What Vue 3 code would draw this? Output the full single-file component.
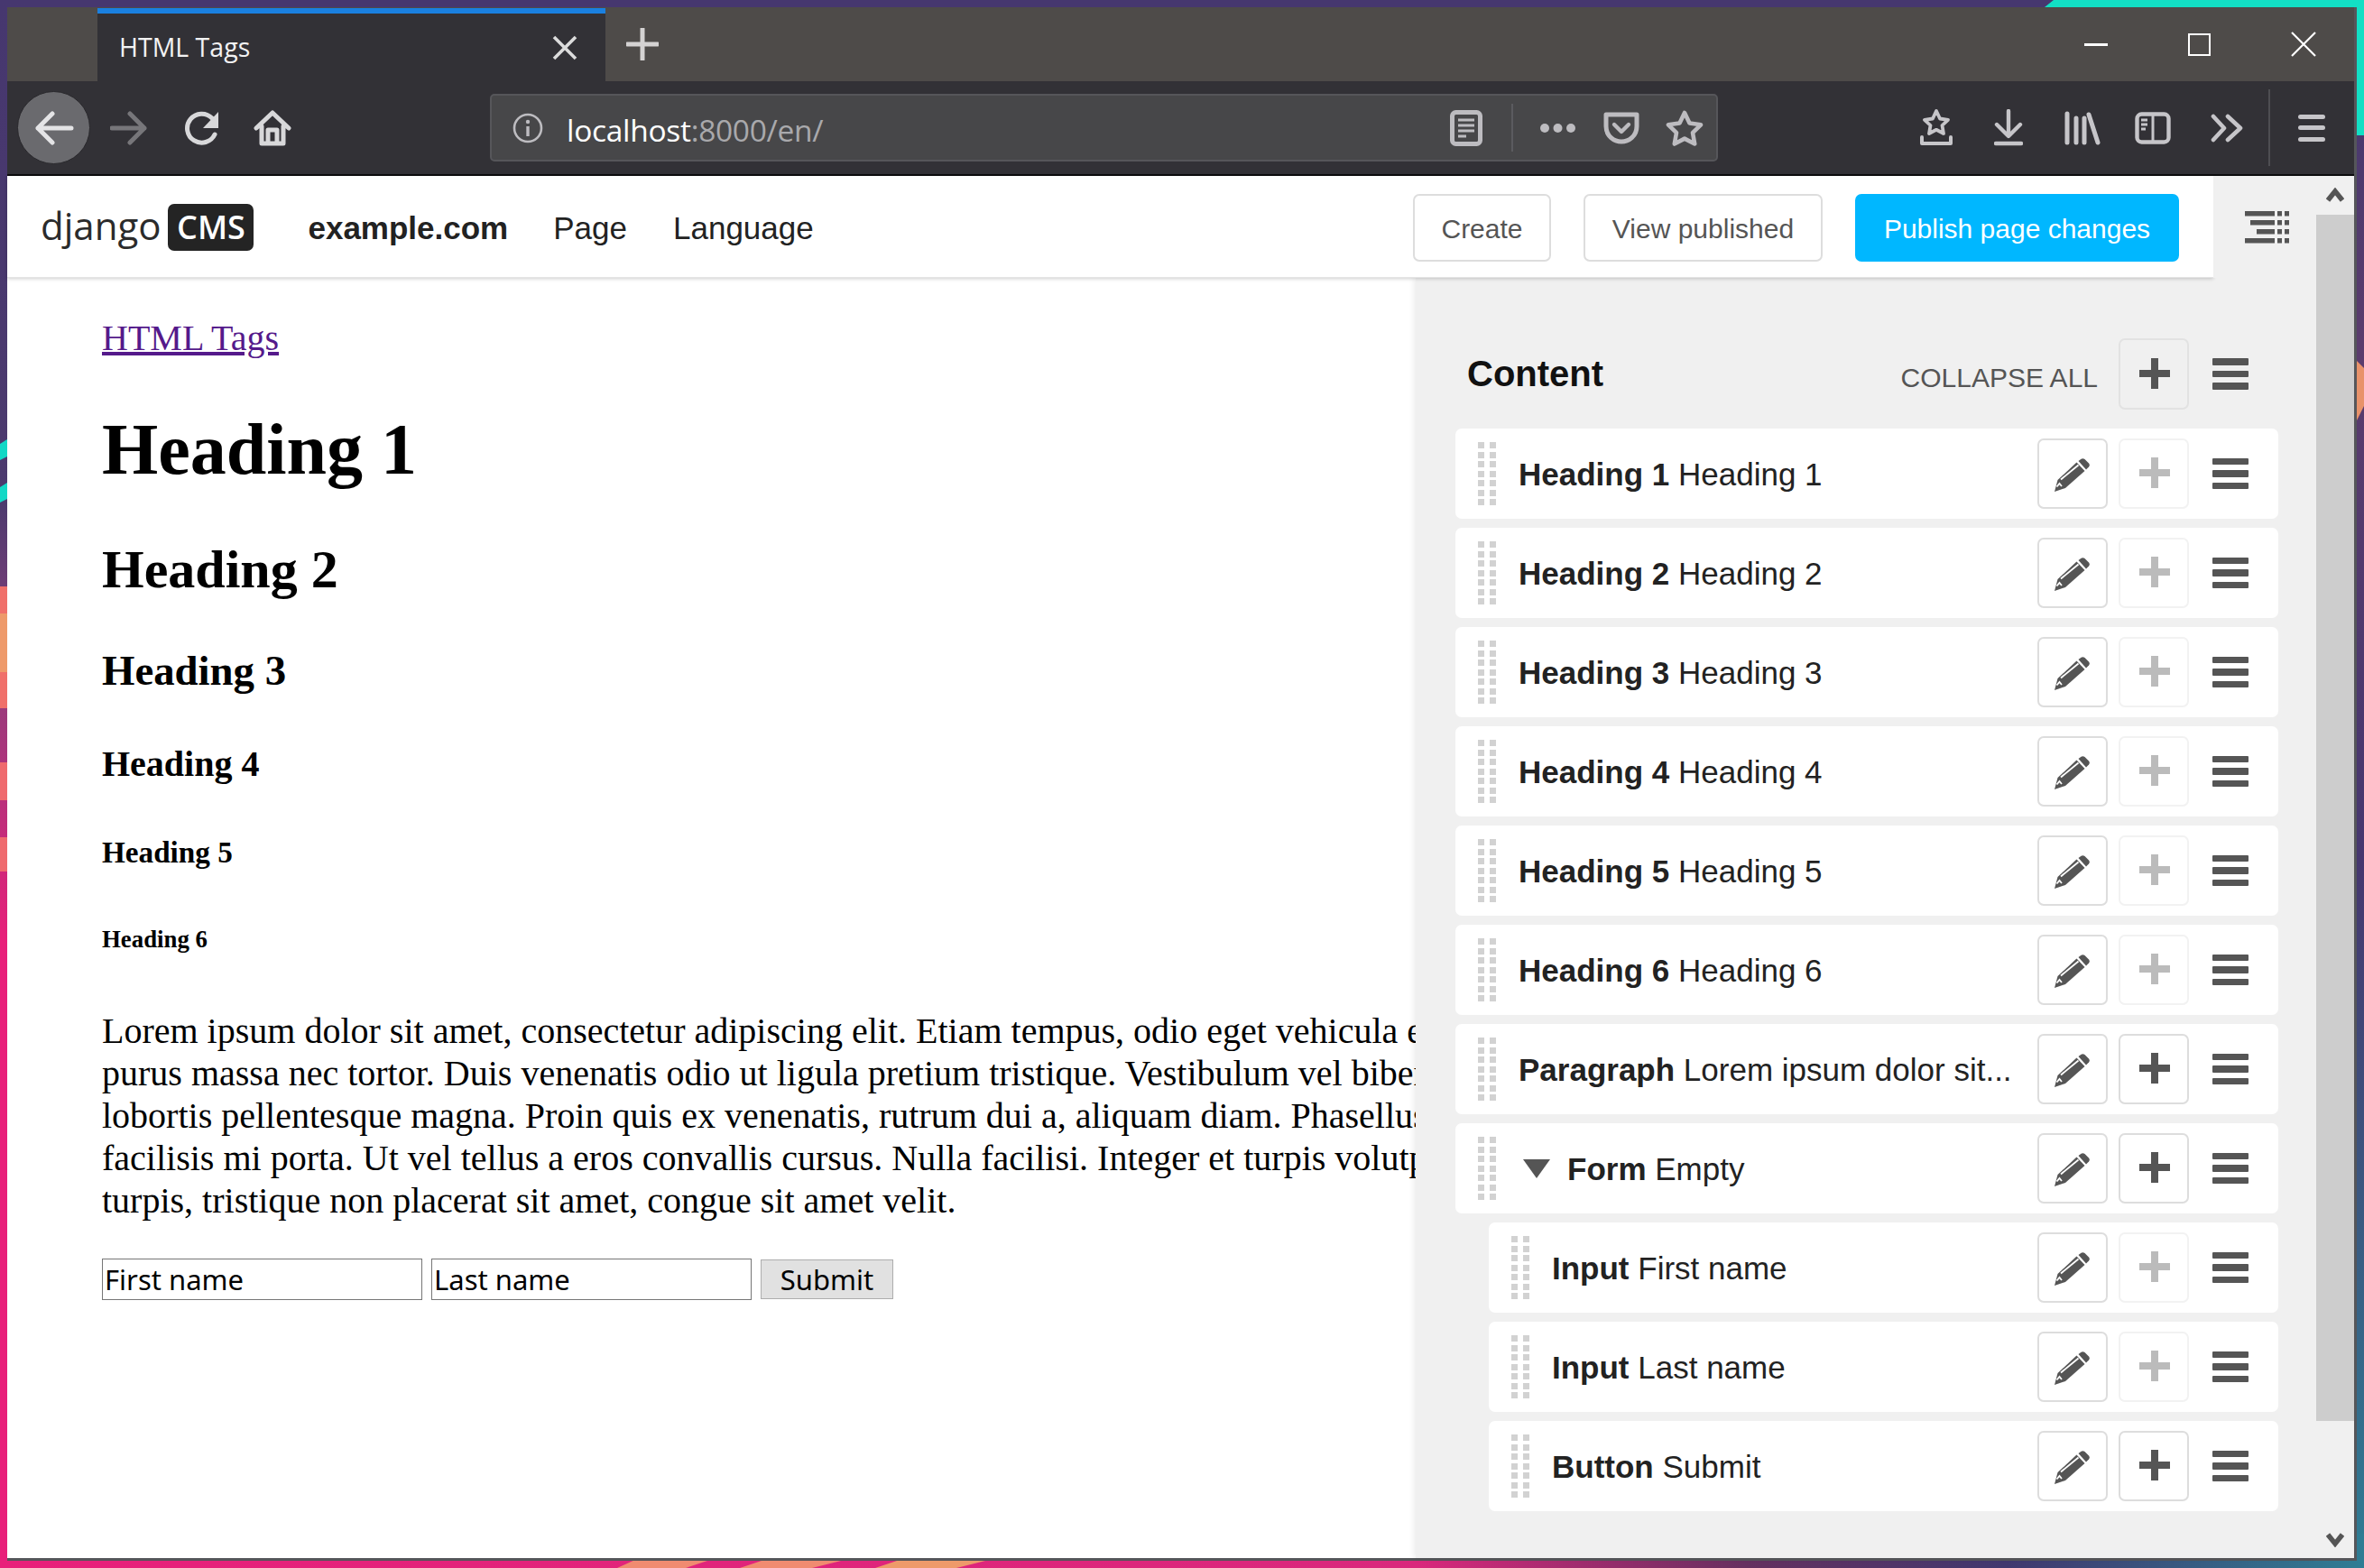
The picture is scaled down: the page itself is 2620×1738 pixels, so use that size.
<template>
  <div class="desktop">
    <svg class="wallpaper" viewBox="0 0 2620 1738" preserveAspectRatio="none" aria-hidden="true">
      <defs>
        <linearGradient id="wall-left" x1="0" y1="0" x2="0" y2="1">
          <stop offset="0" stop-color="#46376f" />
          <stop offset="0.32" stop-color="#4c3a6e" />
          <stop offset="0.42" stop-color="#8b3f7c" />
          <stop offset="0.6" stop-color="#e8207a" />
          <stop offset="1" stop-color="#e8207a" />
        </linearGradient>
        <linearGradient id="wall-right" x1="0" y1="0" x2="0" y2="1">
          <stop offset="0" stop-color="#40386f" />
          <stop offset="0.22" stop-color="#5b3c6d" />
          <stop offset="0.55" stop-color="#46376f" />
          <stop offset="1" stop-color="#2f7d94" />
        </linearGradient>
        <linearGradient id="wall-bottom" x1="0" y1="0" x2="1" y2="0">
          <stop offset="0" stop-color="#e8207a" />
          <stop offset="0.6" stop-color="#d9287c" />
          <stop offset="0.74" stop-color="#64305f" />
          <stop offset="0.85" stop-color="#40386f" />
          <stop offset="1" stop-color="#2f7d94" />
        </linearGradient>
      </defs>
      <rect width="2620" height="1738" fill="#46376f" />
      <rect width="30" height="1738" fill="url(#wall-left)" />
      <rect x="2590" width="30" height="1738" fill="url(#wall-right)" />
      <rect y="1700" width="2620" height="38" fill="url(#wall-bottom)" />
      <polygon points="2266,8 2276,0 2620,0 2620,150 2606,150 2606,8" fill="#12dfc4" />
      <polygon points="0,492 8,487 8,506 0,510" fill="#12d8c6" />
      <polygon points="0,540 8,535 8,553 0,557" fill="#12d8c6" />
      <rect y="650" width="8" height="135" fill="#f0706a" />
      <rect y="680" width="8" height="65" fill="#ee9a6a" />
      <rect y="845" width="8" height="42" fill="#ef6a6e" />
      <rect y="928" width="8" height="38" fill="#ef6a6e" />
      <polygon points="2612,400 2620,408 2620,450 2612,466" fill="#e8926a" />
      <polygon points="684,1738 706,1728 790,1728 760,1738" fill="#f08b70" />
      <polygon points="820,1738 850,1728 940,1728 900,1738" fill="#f08b70" />
      <polygon points="970,1738 1000,1728 1100,1728 1060,1738" fill="#ee9a6a" />
    </svg>

    <div class="window">
      <div class="tabbar">
        <div class="tab">
          <span class="tab-title">HTML Tags</span>
          <svg class="tab-close" width="28" height="28" viewBox="0 0 28 28">
            <path d="M2 2 26 26M26 2 2 26" stroke="#dcdcdc" stroke-width="3.6" fill="none" />
          </svg>
        </div>
        <svg class="tab-new" width="36" height="36" viewBox="0 0 36 36">
          <path d="M18 1V35M1 18H35" stroke="#d4d2d2" stroke-width="5" stroke-linecap="round" fill="none" />
        </svg>
        <div class="win-controls">
          <span class="win-min"></span>
          <span class="win-max"></span>
          <svg width="28" height="28" viewBox="0 0 28 28">
            <path d="M1 1 27 27M27 1 1 27" stroke="#fff" stroke-width="2.2" fill="none" />
          </svg>
        </div>
      </div>

      <div class="navbar">
        <div class="back-btn">
          <svg width="44" height="38" viewBox="0 0 44 38">
            <path d="M41 19H4M20 3 4 19 20 35" stroke="#e4e4e6" stroke-width="5" stroke-linecap="round" stroke-linejoin="round" fill="none" />
          </svg>
        </div>
        <svg class="nav-forward" width="42" height="38" viewBox="0 0 42 38">
          <path d="M2 19H38M22 3 38 19 22 35" stroke="#77767a" stroke-width="5" stroke-linecap="round" stroke-linejoin="round" fill="none" />
        </svg>
        <svg class="nav-reload" width="40" height="38" viewBox="0 0 40 38">
          <path d="M33 26A16 16 0 1 1 30 8" stroke="#d8d8da" stroke-width="5" stroke-linecap="round" fill="none" />
          <path d="M37 1V19H20Z" fill="#d8d8da" />
        </svg>
        <svg class="nav-home" width="42" height="40" viewBox="0 0 42 40">
          <path d="M3 20 21 3 39 20M9 18V37H33V18M16 37V22H26V37" stroke="#d8d8da" stroke-width="5" stroke-linecap="round" stroke-linejoin="round" fill="none" />
        </svg>

        <div class="urlbar">
          <svg class="url-info" width="34" height="34" viewBox="0 0 34 34">
            <circle cx="17" cy="17" r="15" stroke="#bdbcc0" stroke-width="2.6" fill="none" />
            <path d="M17 15V26" stroke="#bdbcc0" stroke-width="3.4" />
            <circle cx="17" cy="10" r="2.2" fill="#bdbcc0" />
          </svg>
          <span class="url-text">localhost<span class="url-dim">:8000/en/</span></span>
          <svg class="url-reader" width="36" height="40" viewBox="0 0 36 40">
            <rect x="2.5" y="2.5" width="31" height="35" rx="4" stroke="#bdbcc0" stroke-width="5" fill="none" />
            <path d="M9 11H27M9 17H27M9 23H27M9 29H18" stroke="#bdbcc0" stroke-width="3" fill="none" />
          </svg>
          <span class="url-sep"></span>
          <svg class="url-dots" width="41" height="12" viewBox="0 0 41 12">
            <circle cx="6" cy="6" r="5" fill="#bdbcc0" /><circle cx="20.5" cy="6" r="5" fill="#bdbcc0" /><circle cx="35" cy="6" r="5" fill="#bdbcc0" />
          </svg>
          <svg class="url-pocket" width="40" height="36" viewBox="0 0 40 36">
            <path d="M3 3H37V16C37 27 28 33 20 33 12 33 3 27 3 16Z" stroke="#bdbcc0" stroke-width="5" stroke-linejoin="round" fill="none" />
            <path d="M12 14 20 22 28 14" stroke="#bdbcc0" stroke-width="4.4" stroke-linecap="round" stroke-linejoin="round" fill="none" />
          </svg>
          <svg class="url-star" width="42" height="40" viewBox="0 0 42 40">
            <path d="M21 3 26.500 14.500 39 16.300 30 25.200 32.200 37.500 21 31.600 9.800 37.500 12 25.200 3 16.300 15.500 14.500Z" stroke="#bdbcc0" stroke-width="4.600" stroke-linejoin="round" fill="none" />
          </svg>
        </div>

        <svg class="tool-save" width="36" height="42" viewBox="0 0 36 42">
          <path d="M18 2 22 10.500 31 11.800 24.500 18 26 27 18 22.800 10 27 11.500 18 5 11.800 14 10.500Z" stroke="#c6c5c9" stroke-width="3.800" stroke-linejoin="round" fill="none" />
          <path d="M2 31V38H34V31" stroke="#c6c5c9" stroke-width="4" stroke-linecap="round" stroke-linejoin="round" fill="none" />
        </svg>
        <svg class="tool-down" width="32" height="42" viewBox="0 0 32 42">
          <path d="M16 2V29M3 17 16 30 29 17M2 38H30" stroke="#c6c5c9" stroke-width="4.400" stroke-linecap="round" stroke-linejoin="round" fill="none" />
        </svg>
        <svg class="tool-lib" width="40" height="38" viewBox="0 0 40 38">
          <path d="M3 3V35M13 8V35M22 8V35M27 4 37 35" stroke="#c6c5c9" stroke-width="5" stroke-linecap="round" fill="none" />
        </svg>
        <svg class="tool-side" width="40" height="36" viewBox="0 0 40 36">
          <rect x="2.500" y="2.500" width="35" height="31" rx="5" stroke="#c6c5c9" stroke-width="4.400" fill="none" />
          <path d="M20 3V33M7 9H14M7 14H14M7 19H12" stroke="#c6c5c9" stroke-width="3" fill="none" />
        </svg>
        <svg class="tool-more" width="36" height="32" viewBox="0 0 36 32">
          <path d="M3 3 15 16 3 29M19 3 33 16 19 29" stroke="#c6c5c9" stroke-width="4.600" stroke-linecap="round" stroke-linejoin="round" fill="none" />
        </svg>
        <span class="tool-sep"></span>
        <div class="tool-menu"><span></span><span></span><span></span></div>
      </div>

      <div class="viewport">
        <div class="page">
          <div class="cms-bar">
            <div class="cms-toolbar">
              <div class="logo">
                <span class="logo-word">django</span>
                <span class="logo-badge">CMS</span>
              </div>
              <span class="cms-site">example.com</span>
              <span class="cms-item cms-page">Page</span>
              <span class="cms-item cms-lang">Language</span>
              <div class="cms-actions">
                <button class="cms-btn cms-btn-create">Create</button>
                <button class="cms-btn cms-btn-view">View published</button>
                <button class="cms-btn cms-btn-publish">Publish page changes</button>
              </div>
            </div>
            <div class="cms-toggle">
              <svg width="50" height="40" viewBox="0 0 50 40">
                <g fill="#555">
                  <rect x="1" y="2" width="33" height="5.500" /><rect x="7" y="12" width="27" height="5.500" />
                  <rect x="14" y="22" width="20" height="5.500" /><rect x="1" y="32" width="33" height="5.500" />
                  <g v-for="y in [2, 12, 22, 32]" :key="y">
                    <rect x="37" :y="y" width="5" height="5.500" /><rect x="45" :y="y" width="5" height="5.500" />
                  </g>
                </g>
              </svg>
            </div>
          </div>

          <div class="page-body">
            <main class="content">
              <a class="content-link" href="#">HTML Tags</a>
              <h1>Heading 1</h1>
              <h2>Heading 2</h2>
              <h3>Heading 3</h3>
              <h4>Heading 4</h4>
              <h5>Heading 5</h5>
              <h6>Heading 6</h6>
              <p class="lorem">
                <span v-for="line in lorem" :key="line">{{ line }}</span>
              </p>
              <form class="demo-form" @submit.prevent>
                <input type="text" value="First name" readonly />
                <input type="text" value="Last name" readonly />
                <button type="button">Submit</button>
              </form>
            </main>

            <aside class="sidebar">
              <div class="side-head">
                <span class="side-title">Content</span>
                <span class="side-collapse">COLLAPSE ALL</span>
                <span class="act act-head">
                  <svg width="34" height="34" viewBox="0 0 34 34"><path d="M17 0V34M0 17H34" stroke="#555" stroke-width="8" /></svg>
                </span>
                <span class="bars"><i></i><i></i><i></i></span>
              </div>

              <div
                v-for="row in rows"
                :key="row.title + row.text"
                class="row"
                :class="{ 'row-nested': row.nested }"
              >
                <span class="handle"><i v-for="n in 14" :key="n"></i></span>
                <span v-if="row.open" class="caret"></span>
                <span class="row-text"><b>{{ row.title }}</b> {{ row.text }}</span>
                <span class="act act-edit">
                  <svg width="40" height="37" viewBox="0 0 40 37">
                    <path d="M27.500 3 30.500 .7Q32.500-.5 34.500 1L39 5.500Q40.500 7.500 39 9.500L36 12.500Z" fill="#555" />
                    <path d="M25.500 4.500 34.500 14 13 33 1 37 4.500 24Z" fill="#555" />
                    <path d="M8 23.500 27.500 7.500M3.500 31.500 6.500 28 9 31" stroke="#fff" stroke-width="1.800" fill="none" />
                  </svg>
                </span>
                <span class="act act-add" :class="{ 'act-off': !row.canAdd }">
                  <svg width="34" height="34" viewBox="0 0 34 34">
                    <path d="M17 0V34M0 17H34" :stroke="row.canAdd ? '#555' : '#bbb'" stroke-width="8" />
                  </svg>
                </span>
                <span class="bars"><i></i><i></i><i></i></span>
              </div>
            </aside>
          </div>
        </div>

        <div class="scrollbar">
          <div class="scroll-btn">
            <svg width="20" height="16" viewBox="0 0 20 16"><path d="M2 14 10 4 18 14" stroke="#555" stroke-width="5.500" fill="none" /></svg>
          </div>
          <div class="scroll-thumb"></div>
          <div class="scroll-btn scroll-btn-down">
            <svg width="20" height="16" viewBox="0 0 20 16"><path d="M2 2 10 12 18 2" stroke="#555" stroke-width="5.500" fill="none" /></svg>
          </div>
        </div>
      </div>
    </div>
  </div>
</template>

<script setup>
const lorem = [
  'Lorem ipsum dolor sit amet, consectetur adipiscing elit. Etiam tempus, odio eget vehicula euismod,',
  'purus massa nec tortor. Duis venenatis odio ut ligula pretium tristique. Vestibulum vel bibendum',
  'lobortis pellentesque magna. Proin quis ex venenatis, rutrum dui a, aliquam diam. Phasellus',
  'facilisis mi porta. Ut vel tellus a eros convallis cursus. Nulla facilisi. Integer et turpis volutpat',
  'turpis, tristique non placerat sit amet, congue sit amet velit.'
]

const rows = [
  { title: 'Heading 1', text: 'Heading 1' },
  { title: 'Heading 2', text: 'Heading 2' },
  { title: 'Heading 3', text: 'Heading 3' },
  { title: 'Heading 4', text: 'Heading 4' },
  { title: 'Heading 5', text: 'Heading 5' },
  { title: 'Heading 6', text: 'Heading 6' },
  { title: 'Paragraph', text: 'Lorem ipsum dolor sit...', canAdd: true },
  { title: 'Form', text: 'Empty', canAdd: true, open: true },
  { title: 'Input', text: 'First name', nested: true },
  { title: 'Input', text: 'Last name', nested: true },
  { title: 'Button', text: 'Submit', nested: true, canAdd: true }
]
</script>

<style>
body {
  margin: 0;
  background: #46376f;
}
</style>

<style scoped>
.desktop {
  position: relative;
  width: 2620px;
  height: 1738px;
  overflow: hidden;
}

.wallpaper {
  position: absolute;
  inset: 0;
  width: 100%;
  height: 100%;
}

.window {
  position: absolute;
  left: 8px;
  top: 8px;
  width: 2604px;
  height: 1722px;
  box-sizing: border-box;
  display: flex;
  flex-direction: column;
  border-right: 3px solid #55565a;
  border-bottom: 3px solid #55565a;
}

/* tabs */
.tabbar {
  height: 82px;
  flex: none;
  display: flex;
  align-items: stretch;
  background: #4e4b49;
  padding-left: 100px;
}

.tab {
  width: 563px;
  box-sizing: border-box;
  margin-top: 1px;
  border-top: 6px solid #1a80e0;
  background: #323136;
  display: flex;
  align-items: center;
  padding: 0 23px 0 24px;
}

.tab-title {
  font: 28.5px "Open Sans", sans-serif;
  color: #f2f2f3;
  flex: 1;
  position: relative;
  top: -1px;
}

.tab-close {
  flex: none;
  margin-right: 8px;
}

.tab-new {
  flex: none;
  align-self: center;
  margin: 0 0 0 23px;
}

.win-controls {
  margin-left: auto;
  display: flex;
  align-items: center;
  padding-right: 42px;
}

.win-min {
  width: 26px;
  height: 3px;
  background: #fff;
  margin-right: 89px;
}

.win-max {
  width: 21px;
  height: 21px;
  border: 2px solid #fff;
  margin-right: 89px;
}

/* navigation bar */
.navbar {
  height: 105px;
  flex: none;
  box-sizing: border-box;
  display: flex;
  align-items: center;
  background: #323136;
  border-bottom: 2px solid #0c0c0d;
  padding-left: 11px;
}

.back-btn {
  width: 81px;
  height: 81px;
  border-radius: 50%;
  background: #6a6a6e;
  border: 1px solid #29282c;
  box-sizing: border-box;
  display: flex;
  align-items: center;
  justify-content: center;
  flex: none;
}

.nav-forward {
  margin-left: 22px;
  flex: none;
}

.nav-reload {
  margin-left: 41px;
  flex: none;
}

.nav-home {
  margin-left: 36px;
  flex: none;
}

.urlbar {
  margin-left: 220px;
  width: 1361px;
  height: 75px;
  box-sizing: border-box;
  flex: none;
  display: flex;
  align-items: center;
  background: #474749;
  border: 2px solid #56565a;
  border-radius: 5px;
  padding-left: 23px;
}

.url-info {
  flex: none;
}

.url-text {
  font: 33.5px "Open Sans", sans-serif;
  color: #fff;
  margin-left: 26px;
  letter-spacing: -0.3px;
  position: relative;
  top: 2px;
}

.url-dim {
  color: #a9a9ac;
}

.url-reader {
  margin-left: auto;
  flex: none;
}

.url-sep {
  width: 2px;
  height: 53px;
  background: #5b5b5f;
  margin-left: 32px;
}

.url-dots {
  margin-left: 29px;
  flex: none;
}

.url-pocket {
  margin-left: 30px;
  flex: none;
}

.url-star {
  margin-left: 29px;
  margin-right: 14px;
  flex: none;
}

.tool-save {
  margin-left: 224px;
  flex: none;
}

.tool-down {
  margin-left: 46px;
  flex: none;
}

.tool-lib {
  margin-left: 46px;
  flex: none;
}

.tool-side {
  margin-left: 38px;
  flex: none;
}

.tool-more {
  margin-left: 44px;
  flex: none;
}

.tool-sep {
  width: 2px;
  height: 85px;
  background: #4e4e52;
  margin-left: 28px;
  flex: none;
}

.tool-menu {
  margin-left: 31px;
  width: 30px;
  display: flex;
  flex-direction: column;
  gap: 7.5px;
  flex: none;
}

.tool-menu span {
  height: 5px;
  border-radius: 3px;
  background: #c6c5c9;
}

/* page area */
.viewport {
  flex: 1;
  min-height: 0;
  display: flex;
}

.page {
  flex: 1;
  min-width: 0;
  display: flex;
  flex-direction: column;
}

.cms-bar {
  height: 113px;
  flex: none;
  display: flex;
  position: relative;
  z-index: 2;
}

.cms-toolbar {
  flex: 1;
  box-sizing: border-box;
  display: flex;
  align-items: center;
  background: #fff;
  padding-left: 38px;
  box-shadow: 0 1px 4px rgba(0, 0, 0, 0.2);
  border-bottom: 1px solid #e4e4e4;
  font-family: "Liberation Sans", Arial, sans-serif;
  font-size: 35px;
  color: #222;
}

.logo {
  display: flex;
  align-items: center;
  gap: 8px;
  flex: none;
  position: relative;
  top: 1px;
}

.logo-word {
  font: 42px "Open Sans", sans-serif;
  color: #2b2b2b;
  line-height: 52px;
  position: relative;
  top: -2px;
  margin-left: -1px;
}

.logo-badge {
  width: 95px;
  height: 52px;
  box-sizing: border-box;
  background: #242424;
  border-radius: 7px;
  color: #fff;
  font: 600 36px/52px "Open Sans", sans-serif;
  text-align: center;
}

.cms-site {
  font-weight: 700;
  margin-left: 60px;
  position: relative;
  top: 2px;
}

.cms-item {
  position: relative;
  top: 2px;
}

.cms-page {
  margin-left: 50px;
}

.cms-lang {
  margin-left: 51px;
}

.cms-actions {
  margin-left: auto;
  display: flex;
  gap: 36px;
  padding-right: 38px;
  position: relative;
  top: 1px;
}

.cms-btn {
  height: 75px;
  box-sizing: border-box;
  background: #fff;
  border: 2.5px solid #ddd;
  border-radius: 7px;
  color: #555;
  font: 30px "Liberation Sans", Arial, sans-serif;
  padding: 3px 0 0;
}

.cms-btn-create {
  width: 153px;
}

.cms-btn-view {
  width: 265px;
}

.cms-btn-publish {
  width: 359px;
  background: #00b7ff;
  border-color: #00b7ff;
  color: #fff;
}

.cms-toggle {
  width: 114px;
  flex: none;
  background: #f0f0f0;
  display: flex;
  align-items: center;
  justify-content: center;
  padding-left: 3px;
  box-sizing: border-box;
}

.page-body {
  flex: 1;
  min-height: 0;
  display: flex;
}

.content {
  flex: 1;
  min-width: 0;
  overflow: hidden;
  background: #fff;
  padding: 43px 0 0 105px;
  font: 40px "Liberation Serif", "Times New Roman", serif;
  color: #000;
}

.content-link {
  color: #551a8b;
  display: block;
  height: 48px;
}

.lorem {
  line-height: 47px;
  white-space: nowrap;
}

.lorem span {
  display: block;
}

.demo-form {
  display: flex;
  align-items: center;
  gap: 10px;
  margin-top: 41px;
}

.demo-form input {
  width: 355px;
  height: 46px;
  box-sizing: border-box;
  border: 1.5px solid #767676;
  padding: 0 2px;
  font: 31px "Noto Sans", sans-serif;
  color: #000;
  background: #fff;
  outline: none;
}

.demo-form button {
  width: 147px;
  height: 44px;
  box-sizing: border-box;
  background: #e1e1e1;
  border: 1.5px solid #adadad;
  padding: 0;
  font: 31px "Noto Sans", sans-serif;
  color: #000;
}

/* structure board */
.sidebar {
  width: 998px;
  flex: none;
  box-sizing: border-box;
  background: #f0f0f0;
  box-shadow: -2px 0 6px rgba(0, 0, 0, 0.08);
  padding: 67px 42px 0 44px;
  display: flex;
  flex-direction: column;
  gap: 10px;
  font-family: "Liberation Sans", Arial, sans-serif;
  color: #222;
}

.side-head {
  height: 79px;
  display: flex;
  align-items: center;
  padding: 0 33px 0 13px;
  margin-bottom: 11px;
}

.side-title {
  font-size: 40px;
  font-weight: 700;
  color: #111;
  flex: 1;
}

.side-collapse {
  font-size: 30px;
  color: #555;
  margin-right: 23px;
  position: relative;
  top: 4px;
}

.row {
  height: 100px;
  flex: none;
  box-sizing: border-box;
  background: #fff;
  border-radius: 7px;
  display: flex;
  align-items: center;
  padding: 0 33px 0 25px;
}

.row-nested {
  margin-left: 37px;
}

.handle {
  width: 20px;
  height: 70px;
  flex: none;
  display: grid;
  grid-template-columns: 7px 7px;
  column-gap: 6px;
  align-content: space-between;
  grid-auto-rows: 7px;
}

.handle i {
  background: #d2d2d2;
}

.caret {
  width: 0;
  height: 0;
  flex: none;
  border-left: 15px solid transparent;
  border-right: 15px solid transparent;
  border-top: 21px solid #555;
  margin-left: 30px;
  margin-right: -6px;
}

.row-text {
  flex: 1;
  min-width: 0;
  margin-left: 25px;
  font-size: 35px;
  white-space: nowrap;
  overflow: hidden;
  line-height: 44px;
  position: relative;
  top: 1px;
}

.act {
  width: 78px;
  height: 78px;
  flex: none;
  box-sizing: border-box;
  border: 2.500px solid #ddd;
  border-radius: 7px;
  display: flex;
  align-items: center;
  justify-content: center;
  background: #fff;
}

.act-add svg,
.act-head svg {
  position: relative;
  left: 1px;
  top: -1px;
}

.act-edit svg {
  position: relative;
  left: -1px;
  top: 1px;
}

.act-add {
  margin-left: 12px;
}

.act-off {
  border-color: #f2f2f2;
}

.act-head {
  height: 79px;
  background: #f0f0f0;
  border-color: #e2e2e2;
}

.bars {
  width: 40px;
  flex: none;
  margin-left: 26px;
  display: flex;
  flex-direction: column;
  gap: 6px;
}

.bars i {
  height: 7.500px;
  background: #555;
  border-radius: 1px;
}

.scrollbar {
  width: 42px;
  flex: none;
  background: #f0f0f0;
  display: flex;
  flex-direction: column;
}

.scroll-btn {
  height: 41px;
  flex: none;
  display: flex;
  align-items: center;
  justify-content: center;
}

.scroll-btn-down {
  margin-top: auto;
}

.scroll-thumb {
  height: 1337px;
  margin-top: 2px;
  background: #cdcdcd;
}
</style>
